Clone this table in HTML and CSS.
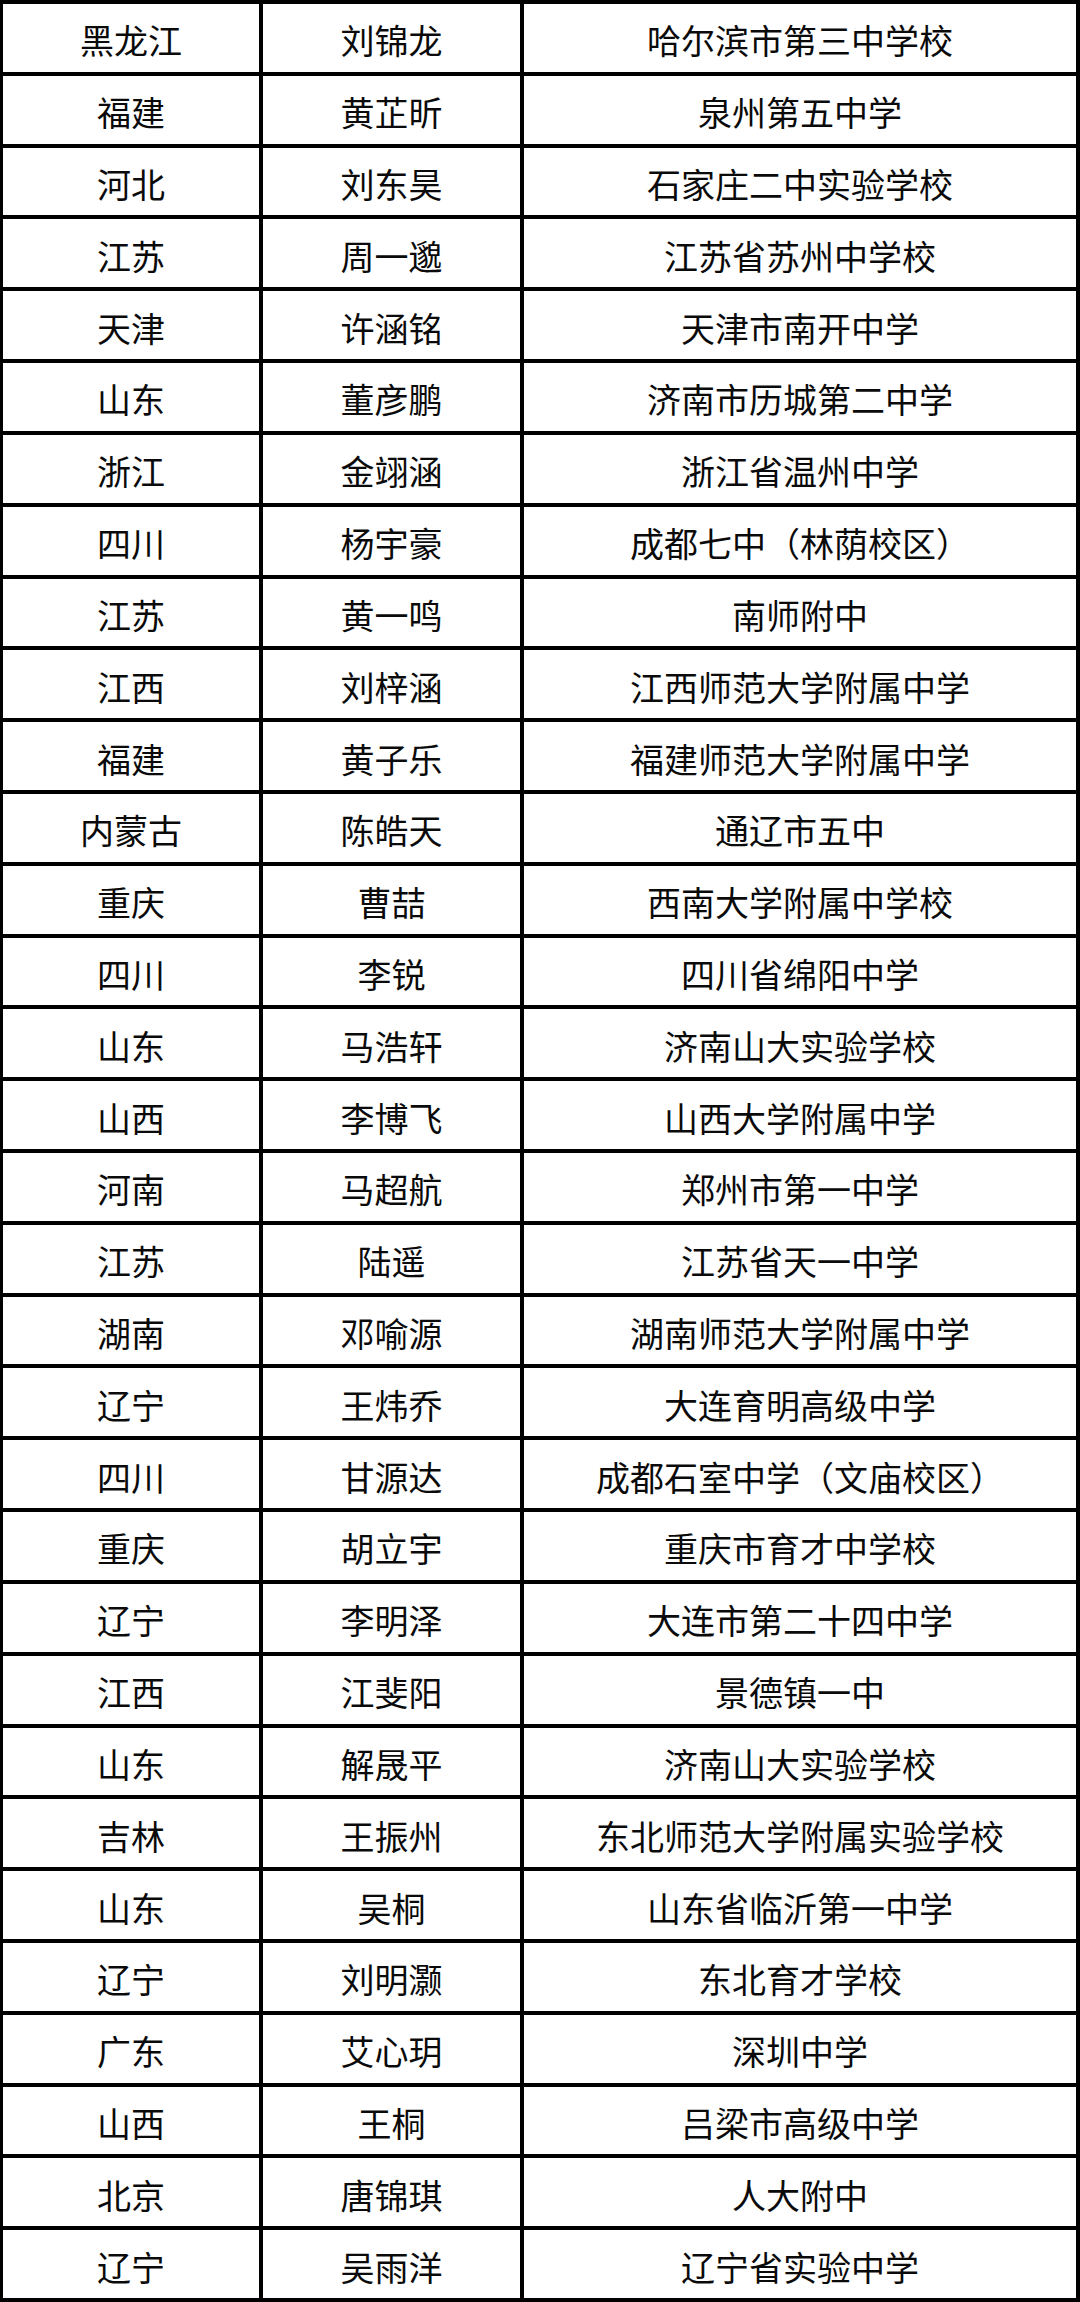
FILE: index.html
```html
<!DOCTYPE html>
<html lang="zh">
<head>
<meta charset="utf-8">
<link rel="stylesheet" href="styles.css">
</head>
<body>
<div class="sheet">
<div class="c">黑龙江</div><div class="c">刘锦龙</div><div class="c">哈尔滨市第三中学校</div>
<div class="c">福建</div><div class="c">黄芷昕</div><div class="c">泉州第五中学</div>
<div class="c">河北</div><div class="c">刘东昊</div><div class="c">石家庄二中实验学校</div>
<div class="c">江苏</div><div class="c">周一邈</div><div class="c">江苏省苏州中学校</div>
<div class="c">天津</div><div class="c">许涵铭</div><div class="c">天津市南开中学</div>
<div class="c">山东</div><div class="c">董彦鹏</div><div class="c">济南市历城第二中学</div>
<div class="c">浙江</div><div class="c">金翊涵</div><div class="c">浙江省温州中学</div>
<div class="c">四川</div><div class="c">杨宇豪</div><div class="c">成都七中（林荫校区）</div>
<div class="c">江苏</div><div class="c">黄一鸣</div><div class="c">南师附中</div>
<div class="c">江西</div><div class="c">刘梓涵</div><div class="c">江西师范大学附属中学</div>
<div class="c">福建</div><div class="c">黄子乐</div><div class="c">福建师范大学附属中学</div>
<div class="c">内蒙古</div><div class="c">陈皓天</div><div class="c">通辽市五中</div>
<div class="c">重庆</div><div class="c">曹喆</div><div class="c">西南大学附属中学校</div>
<div class="c">四川</div><div class="c">李锐</div><div class="c">四川省绵阳中学</div>
<div class="c">山东</div><div class="c">马浩轩</div><div class="c">济南山大实验学校</div>
<div class="c">山西</div><div class="c">李博飞</div><div class="c">山西大学附属中学</div>
<div class="c">河南</div><div class="c">马超航</div><div class="c">郑州市第一中学</div>
<div class="c">江苏</div><div class="c">陆遥</div><div class="c">江苏省天一中学</div>
<div class="c">湖南</div><div class="c">邓喻源</div><div class="c">湖南师范大学附属中学</div>
<div class="c">辽宁</div><div class="c">王炜乔</div><div class="c">大连育明高级中学</div>
<div class="c">四川</div><div class="c">甘源达</div><div class="c">成都石室中学（文庙校区）</div>
<div class="c">重庆</div><div class="c">胡立宇</div><div class="c">重庆市育才中学校</div>
<div class="c">辽宁</div><div class="c">李明泽</div><div class="c">大连市第二十四中学</div>
<div class="c">江西</div><div class="c">江斐阳</div><div class="c">景德镇一中</div>
<div class="c">山东</div><div class="c">解晟平</div><div class="c">济南山大实验学校</div>
<div class="c">吉林</div><div class="c">王振州</div><div class="c">东北师范大学附属实验学校</div>
<div class="c">山东</div><div class="c">吴桐</div><div class="c">山东省临沂第一中学</div>
<div class="c">辽宁</div><div class="c">刘明灏</div><div class="c">东北育才学校</div>
<div class="c">广东</div><div class="c">艾心玥</div><div class="c">深圳中学</div>
<div class="c">山西</div><div class="c">王桐</div><div class="c">吕梁市高级中学</div>
<div class="c">北京</div><div class="c">唐锦琪</div><div class="c">人大附中</div>
<div class="c">辽宁</div><div class="c">吴雨洋</div><div class="c">辽宁省实验中学</div>
</div>
</body>
</html>
```
FILE: styles.css
```css
html, body {
  margin: 0;
  padding: 0;
  background: #ffffff;
}
.sheet {
  box-sizing: border-box;
  width: 1080px;
  height: 2302px;
  display: grid;
  grid-template-columns: 260px 261px 556px;
  grid-template-rows: repeat(32, 1fr);
  border-top: 4px solid #000;
  border-left: 3px solid #000;
  font-family: "Microsoft YaHei", "Noto Sans CJK SC", sans-serif;
  font-size: 34px;
  color: #0a0a0a;
}
.c {
  border-right: 4px solid #000;
  border-bottom: 4px solid #000;
  display: flex;
  align-items: center;
  justify-content: center;
  padding-top: 4px;
  box-sizing: border-box;
  white-space: nowrap;
}
```
